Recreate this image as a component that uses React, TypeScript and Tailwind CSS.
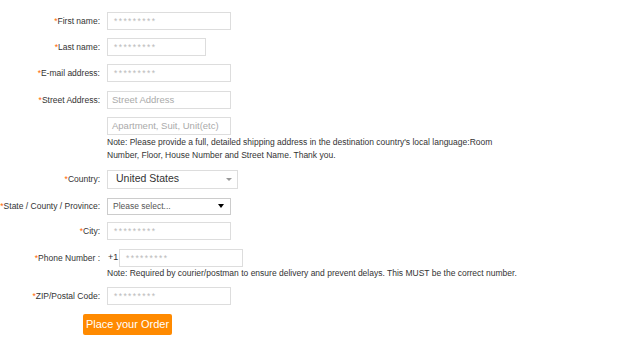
import { ReactNode } from "react";

const STARS = "*********";

function Label({ children }: { children: ReactNode }) {
  return (
    <div className="w-[107px] shrink-0 text-right pr-[7px] text-[8.5px] leading-[12px] whitespace-nowrap text-[#333]">
      <span className="text-[#f60]">*</span>
      {children}
    </div>
  );
}

function TextBox({ placeholder = STARS, width = "w-[124px]", big = false }: { placeholder?: string; width?: string; big?: boolean }) {
  return (
    <div
      className={`${width} h-[18px] shrink-0 border border-[#ddd] bg-white flex items-center ${
        big ? "pl-[4px] text-[9.5px] text-[#aaa]" : "pl-[6px] text-[8.5px] tracking-[1.4px] text-[#bbb]"
      }`}
    >
      {placeholder}
    </div>
  );
}

function Row({ label, children, className = "" }: { label: string; children: ReactNode; className?: string }) {
  return (
    <div className={`flex items-center h-[18px] ${className}`}>
      <Label>{label}</Label>
      {children}
    </div>
  );
}

export default function App() {
  return (
    <div
      className="w-[640px] h-[346px] bg-white pt-[12px] overflow-hidden"
      style={{ fontFamily: "'Liberation Sans', Arial, sans-serif" }}
    >
      <Row label="First name:">
        <TextBox />
      </Row>
      <Row label="Last name:" className="mt-[8px]">
        <TextBox width="w-[99px]" />
      </Row>
      <Row label="E-mail address:" className="mt-[8px]">
        <TextBox />
      </Row>
      <Row label="Street Address:" className="mt-[9px]">
        <TextBox placeholder="Street Address" big />
      </Row>

      {/* Street address line 2 + note */}
      <div className="pl-[107px] mt-[8px]">
        <TextBox placeholder="Apartment, Suit, Unit(etc)" big />
        <p className="mt-[1px] text-[8.5px] leading-[13px] text-[#333] whitespace-nowrap">
          Note: Please provide a full, detailed shipping address in the destination country's local language:Room
          <br />
          Number, Floor, House Number and Street Name. Thank you.
        </p>
      </div>

      <Row label="Country:" className="mt-[8px]">
        <div className="w-[131px] h-[19px] border border-[#ddd] bg-white flex items-center justify-between pl-[8px] pr-[5px]">
          <span className="text-[10.5px] text-[#333]">United States</span>
          <span className="w-0 h-0 border-l-[3px] border-r-[3px] border-t-[3px] border-l-transparent border-r-transparent border-t-[#999]" />
        </div>
      </Row>

      <Row label="State / County / Province:" className="mt-[9px]">
        <div className="w-[124px] h-[17px] border border-[#ccc] bg-white flex items-center justify-between pl-[5px] pr-[6px]">
          <span className="text-[8.5px] text-[#555]">Please select...</span>
          <span className="w-0 h-0 border-l-[3px] border-r-[3px] border-t-[4px] border-l-transparent border-r-transparent border-t-black" />
        </div>
      </Row>

      <Row label="City:" className="mt-[7px]">
        <TextBox />
      </Row>

      <div className="flex mt-[9px]">
        <div className="h-[18px] flex items-center">
          <Label>Phone Number :</Label>
        </div>
        <div>
          <div className="flex items-center h-[18px]">
            <span className="text-[9px] text-[#333] w-[12px] pl-[1px]">+1</span>
            <TextBox />
          </div>
          <p className="mt-[0px] text-[8.5px] leading-[12px] text-[#333] whitespace-nowrap">
            Note: Required by courier/postman to ensure delivery and prevent delays. This MUST be the correct number.
          </p>
        </div>
      </div>

      <Row label="ZIP/Postal Code:" className="mt-[8px]">
        <TextBox />
      </Row>

      <div className="pl-[83px] mt-[9px]">
        <button className="block w-[89px] h-[21px] rounded-[2px] bg-[#ff8a00] text-white text-[11px]">
          Place your Order
        </button>
      </div>
    </div>
  );
}
